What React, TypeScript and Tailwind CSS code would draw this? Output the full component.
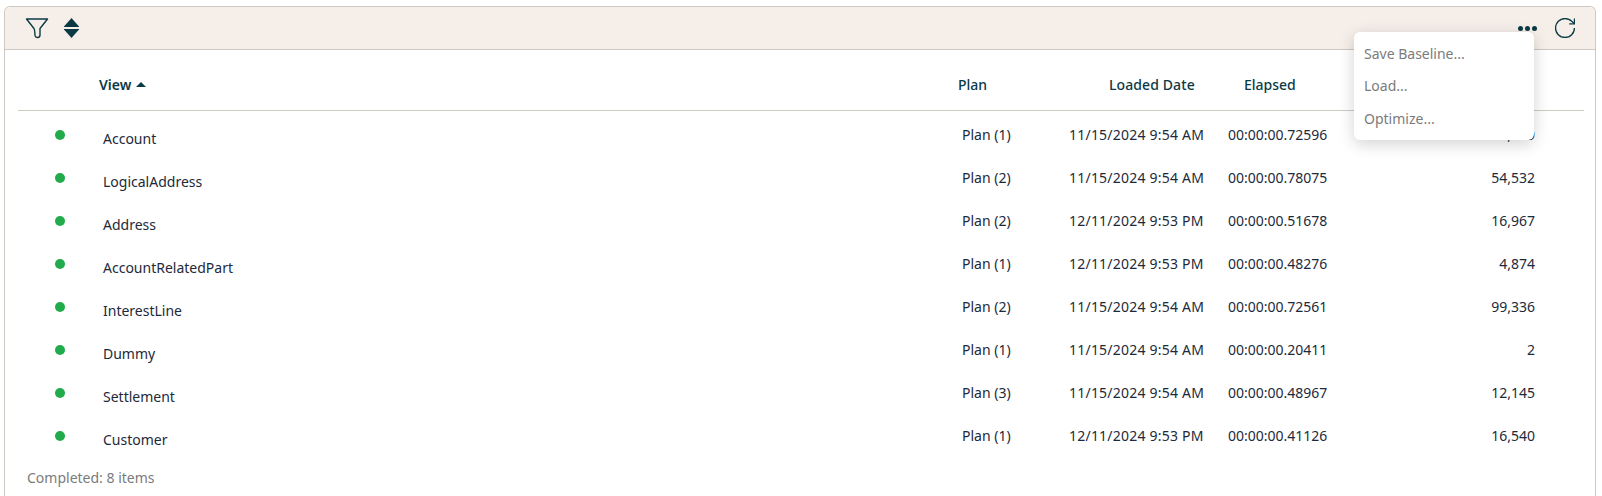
import React from 'react';

type Row = { name: string; plan: string; date: string; elapsed: string; count: string };

const rows: Row[] = [
  { name: 'Account', plan: 'Plan (1)', date: '11/15/2024 9:54 AM', elapsed: '00:00:00.72596', count: '1,409' },
  { name: 'LogicalAddress', plan: 'Plan (2)', date: '11/15/2024 9:54 AM', elapsed: '00:00:00.78075', count: '54,532' },
  { name: 'Address', plan: 'Plan (2)', date: '12/11/2024 9:53 PM', elapsed: '00:00:00.51678', count: '16,967' },
  { name: 'AccountRelatedPart', plan: 'Plan (1)', date: '12/11/2024 9:53 PM', elapsed: '00:00:00.48276', count: '4,874' },
  { name: 'InterestLine', plan: 'Plan (2)', date: '11/15/2024 9:54 AM', elapsed: '00:00:00.72561', count: '99,336' },
  { name: 'Dummy', plan: 'Plan (1)', date: '11/15/2024 9:54 AM', elapsed: '00:00:00.20411', count: '2' },
  { name: 'Settlement', plan: 'Plan (3)', date: '11/15/2024 9:54 AM', elapsed: '00:00:00.48967', count: '12,145' },
  { name: 'Customer', plan: 'Plan (1)', date: '12/11/2024 9:53 PM', elapsed: '00:00:00.41126', count: '16,540' },
];

const FilterIcon = () => (
  <svg width="24" height="21" viewBox="0 0 24 21" fill="none" stroke="#0b3a45" strokeWidth="1.4" strokeLinejoin="round">
    <path d="M1.5 1h21l-7.500 9.500v6.500c0 3-4.500 3.500-5 .5-.3-2 .2-5-1-7z" />
  </svg>
);

const SortIcon = () => (
  <svg width="15" height="20" viewBox="0 0 15 20" fill="#0b3a45">
    <path d="M7.500 0l7.500 8.500v.5H0v-.5z" />
    <path d="M7.500 20l7.500-8.500V11H0v.5z" />
  </svg>
);

const RefreshIcon = () => (
  <svg width="20" height="20" viewBox="2.5 2.500 19 19" fill="none" stroke="#0b3a45" strokeWidth="1.25">
    <path d="M21 12a9 9 0 1 1-9-9c2.520 0 4.930 1 6.740 2.740L21 8" />
    <path d="M21 3v5h-5" />
  </svg>
);

export default function App() {
  return (
    <div className="relative h-[496px] w-[1602px] overflow-hidden bg-white pl-[4px] pr-[6px] pt-[6px] font-['Noto_Sans',sans-serif] text-[14px] text-[#1d2a3a]">
      <div className="h-[490px] rounded-t-md border border-b-0 border-[#cfc9c3]">
        <div className="flex h-[43px] items-center justify-between rounded-t-md border-b border-[#cfc9c3] bg-[#f5eee9] pl-[20px] pr-[20px]">
          <div className="flex items-center gap-[15px]">
            <FilterIcon />
            <SortIcon />
          </div>
          <div className="flex items-center gap-[18px]">
            <div className="flex gap-[2px]">
              <span className="h-[5px] w-[5px] rounded-full bg-[#0b3a45]" />
              <span className="h-[5px] w-[5px] rounded-full bg-[#0b3a45]" />
              <span className="h-[5px] w-[5px] rounded-full bg-[#0b3a45]" />
            </div>
            <RefreshIcon />
          </div>
        </div>

        <div className="ml-[13px] mr-[11px]">
          <div className="flex h-[61px] items-center border-b border-[#cfc9c3] pt-[8px] font-medium text-[#0b3a45]">
            <div className="flex w-[81px] shrink-0" />
            <div className="flex w-[859px] shrink-0 items-center gap-[5px] font-semibold">
              View
              <svg width="10" height="5" viewBox="0 0 10 5" fill="#0b3a45">
                <path d="M5 0l5 5H0z" />
              </svg>
            </div>
            <div className="w-[151px] shrink-0">Plan</div>
            <div className="w-[135px] shrink-0 tracking-[0.1px]">Loaded Date</div>
            <div>Elapsed</div>
          </div>

          <div className="pt-[5px]">
            {rows.map(r => (
              <div key={r.name} className="flex h-[43px] items-center">
                <div className="flex w-[85px] shrink-0 pb-[6px] pl-[37px]">
                  <span className="h-[10px] w-[10px] rounded-full bg-[#22ab4b]" />
                </div>
                <div className="w-[859px] shrink-0 pt-[1px]">{r.name}</div>
                <div className="w-[107px] shrink-0 pb-[7px]">{r.plan}</div>
                <div className="w-[159px] shrink-0 pb-[7px] tracking-[0.22px]">{r.date}</div>
                <div className="w-[199px] shrink-0 pb-[7px]">{r.elapsed}</div>
                <div className="w-[108px] shrink-0 pb-[7px] text-right">{r.count}</div>
              </div>
            ))}
          </div>

          <div className="ml-[9px] mt-[7px] text-[#7b7b7b]">Completed: 8 items</div>
        </div>
      </div>

      <div className="absolute left-[1354px] top-[32px] flex h-[108px] w-[180px] flex-col rounded-md bg-white pl-[10px] pt-[5px] text-[#7b7b7b] shadow-[0_4px_16px_rgba(0,0,0,0.18)]">
        <div className="flex h-[32px] items-center">Save Baseline...</div>
        <div className="flex h-[33px] items-center">Load...</div>
        <div className="flex h-[33px] items-center">Optimize...</div>
      </div>
    </div>
  );
}
